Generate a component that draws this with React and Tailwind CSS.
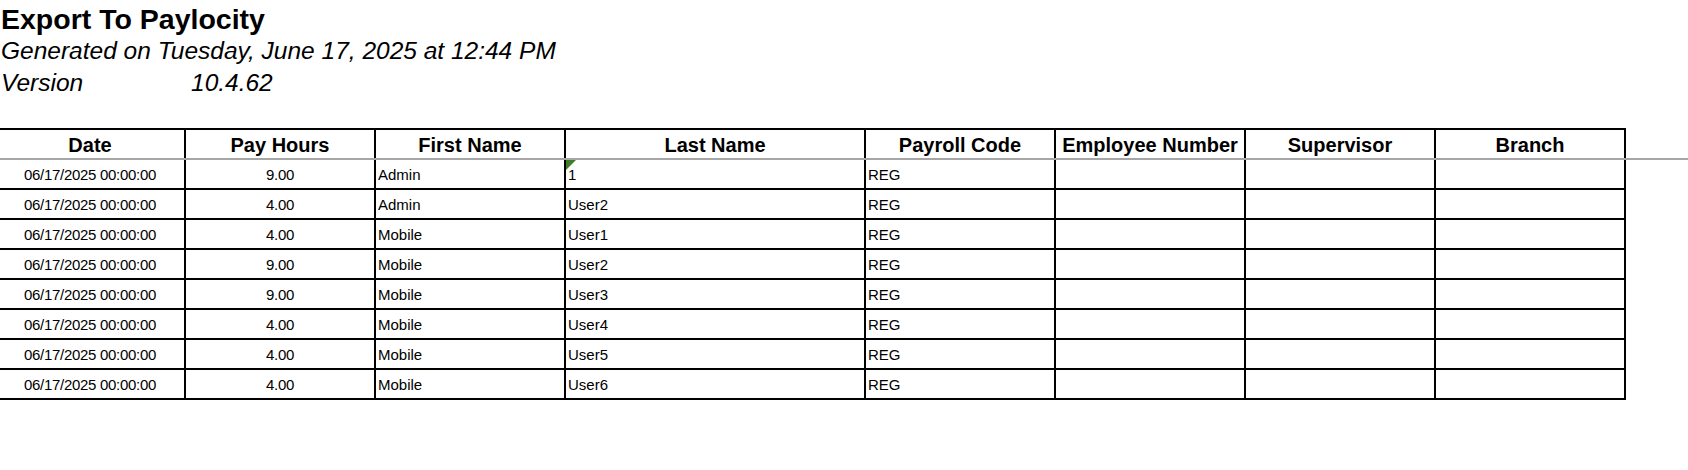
import React from 'react';

const COLUMNS = [
  { label: 'Date', width: 'w-[190px]' },
  { label: 'Pay Hours', width: 'w-[190px]' },
  { label: 'First Name', width: 'w-[190px]' },
  { label: 'Last Name', width: 'w-[300px]' },
  { label: 'Payroll Code', width: 'w-[190px]' },
  { label: 'Employee Number', width: 'w-[190px]' },
  { label: 'Supervisor', width: 'w-[190px]' },
  { label: 'Branch', width: 'w-[190px]' },
];

const ROWS = [
  { hours: '9.00', first: 'Admin', last: '1', flagged: true },
  { hours: '4.00', first: 'Admin', last: 'User2' },
  { hours: '4.00', first: 'Mobile', last: 'User1' },
  { hours: '9.00', first: 'Mobile', last: 'User2' },
  { hours: '9.00', first: 'Mobile', last: 'User3' },
  { hours: '4.00', first: 'Mobile', last: 'User4' },
  { hours: '4.00', first: 'Mobile', last: 'User5' },
  { hours: '4.00', first: 'Mobile', last: 'User6' },
];

const cell = 'h-[30px] pt-[2px] border-r-2 border-b-2 border-black flex items-center overflow-hidden whitespace-nowrap';

function CommentMark() {
  // little green corner flag on a cell that carries a note
  return (
    <svg className="absolute left-0 top-0" width="10" height="10" viewBox="0 0 10 10">
      <polygon points="0,0 10,0 0,10" fill="#3f7d2a" />
    </svg>
  );
}

export default function App() {
  return (
    <div className="min-h-screen bg-white text-black font-['Liberation_Sans',Arial,sans-serif] overflow-hidden">
      <div className="pl-[1px] pt-[4px]">
        <h1 className="text-[28.5px] leading-[31px] font-bold">Export To Paylocity</h1>
        <p className="text-[24.5px] leading-[32px] italic">
          Generated on Tuesday, June 17, 2025 at 12:44 PM
        </p>
        <div className="flex text-[24.5px] leading-[32px] italic">
          <span className="w-[190px]">Version</span>
          <span>10.4.62</span>
        </div>
      </div>

      <div className="relative mt-[29px]">
        <div className="ml-[-6px] w-max border-l-2 border-t-2 border-black">
          {/* header */}
          <div className="flex">
            {COLUMNS.map((c) => (
              <div
                key={c.label}
                className={`${cell} ${c.width} justify-center text-[20px] font-bold`}
              >
                {c.label}
              </div>
            ))}
          </div>

          {ROWS.map((r, i) => (
            <div key={i} className="flex text-[15px]">
              <div className={`${cell} w-[190px] justify-center tracking-[-0.3px]`}>
                06/17/2025 00:00:00
              </div>
              <div className={`${cell} w-[190px] justify-center tracking-[-0.3px]`}>
                {r.hours}
              </div>
              <div className={`${cell} w-[190px] pl-[2px]`}>{r.first}</div>
              <div className={`${cell} w-[300px] pl-[2px] relative`}>
                {r.flagged && <CommentMark />}
                {r.last}
              </div>
              <div className={`${cell} w-[190px] pl-[2px]`}>REG</div>
              <div className={`${cell} w-[190px]`} />
              <div className={`${cell} w-[190px]`} />
              <div className={`${cell} w-[190px]`} />
            </div>
          ))}
        </div>

        {/* frozen pane divider */}
        <div className="absolute left-0 right-0 top-[30px] h-[2px] bg-[#a6a6a6]" />
      </div>
    </div>
  );
}
